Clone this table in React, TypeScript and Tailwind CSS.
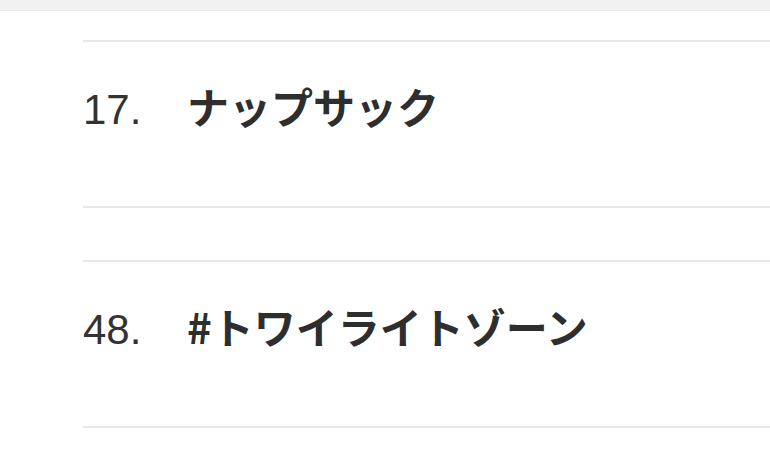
import React from "react";

const items = [
  { n: "17.", t: "ナップサック" },
  { n: "48.", t: "#トワイライトゾーン" },
];

export default function App() {
  return (
    <div className="w-[770px] h-[457px] bg-white overflow-hidden">
      <div className="h-[11px] bg-[#f0f0f0] border-b border-[#e9e9e9]" />
      <div className="ml-[83px] pt-[29px] flex flex-col gap-[52px]">
        {items.map((it) => (
          <div
            key={it.n}
            className="h-[168px] border-y-2 border-[#e8e8e8] pt-[43px] flex items-baseline"
          >
            <span
              className="w-[104px] shrink-0 text-[42px] leading-none text-[#333333]"
              style={{ fontFamily: '"Liberation Sans", Arial, sans-serif' }}
            >
              {it.n}
            </span>
            <span
              className="text-[42px] leading-none font-bold text-[#2e2e2e] whitespace-nowrap"
              style={{ fontFamily: '"Noto Sans CJK JP", "Liberation Sans", sans-serif' }}
            >
              {it.t}
            </span>
          </div>
        ))}
      </div>
    </div>
  );
}
